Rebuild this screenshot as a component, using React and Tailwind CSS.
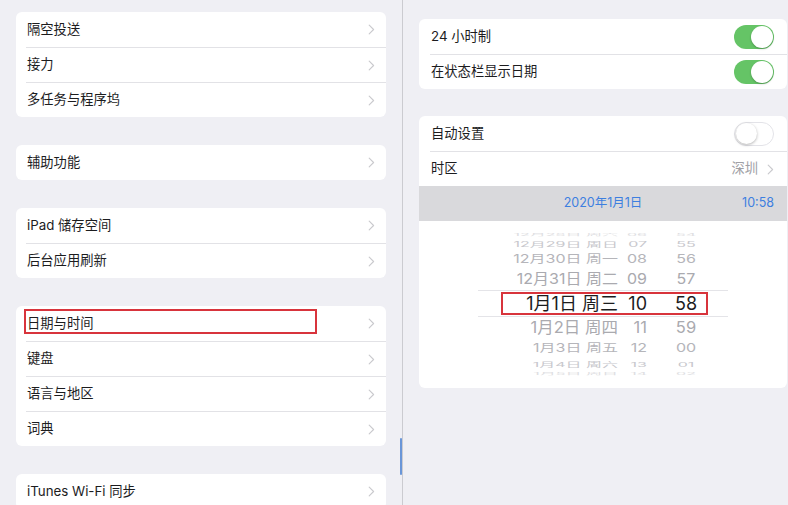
import React from 'react'

const Chevron = () => (
  <svg width="7" height="11" viewBox="0 0 7 11" fill="none">
    <path d="M1.2 1.2l4.4 4.3L1.2 9.8" stroke="#cacace" strokeWidth="1.15" strokeLinecap="round" strokeLinejoin="round" />
  </svg>
)

function Toggle({ on }) {
  if (on) {
    return (
      <div className="w-[40px] h-[24px] rounded-full bg-[#65c466] flex items-center justify-end pr-px">
        <div className="w-[22px] h-[22px] rounded-full bg-white shadow-[0_1px_2px_rgba(0,0,0,0.25)]" />
      </div>
    )
  }
  return (
    <div className="w-[40px] h-[24px] rounded-full bg-white border border-[#e3e3e8] flex items-center pl-px">
      <div className="w-[21px] h-[21px] rounded-full bg-white shadow-[0_1px_3px_rgba(0,0,0,0.3)]" />
    </div>
  )
}

function LeftCard({ items, highlight }) {
  return (
    <div className="relative shrink-0 bg-white rounded-md overflow-hidden">
      {items.map((label, i) => (
        <div key={label} className="h-[35px] pl-[10px]">
          <div className={`h-full flex items-center justify-between pl-px pr-[11px] ${i > 0 ? 'border-t border-[#e2e2e6]' : ''}`}>
            <span className="text-[13.3px] text-[#1c1c1e]">{label}</span>
            <Chevron />
          </div>
        </div>
      ))}
      {highlight && (
        <div className="absolute left-[8px] top-[3px] w-[293px] h-[25px] border-2 border-[#d8343c]" />
      )}
    </div>
  )
}

// wheel rows: perspective is faked by squashing the rows away from the centre
const rows = [
  { d: '12月28日 周六', h: '06', m: '54', hh: 'h-[5px]', cls: 'text-[16px] scale-y-[0.2] text-[#dedee2]' },
  { d: '12月29日 周日', h: '07', m: '55', hh: 'h-[13px]', cls: 'text-[16px] scale-y-[0.45] text-[#c8c8cd]' },
  { d: '12月30日 周一', h: '08', m: '56', hh: 'h-[18px]', cls: 'text-[16px] scale-y-[0.72] text-[#b5b5ba]' },
  { d: '12月31日 周二', h: '09', m: '57', hh: 'h-[22px]', cls: 'text-[16px] scale-y-[0.9] text-[#aaaaaf]' },
  { d: '1月1日 周三', h: '10', m: '58', hh: 'h-[27px]', cls: 'text-[18px] text-[#1c1c1e]', sel: true },
  { d: '1月2日 周四', h: '11', m: '59', hh: 'h-[21px]', cls: 'text-[16.5px] scale-y-[0.95] text-[#aaaaaf]' },
  { d: '1月3日 周五', h: '12', m: '00', hh: 'h-[19px]', cls: 'text-[16px] scale-y-[0.72] text-[#b5b5ba]' },
  { d: '1月4日 周六', h: '13', m: '01', hh: 'h-[14px]', cls: 'text-[16px] scale-y-[0.42] text-[#c8c8cd]' },
  { d: '1月5日 周日', h: '14', m: '02', hh: 'h-[5px]', cls: 'text-[16px] scale-y-[0.2] text-[#dedee2]' },
]

function Picker() {
  return (
    <div className="pt-[11px] pb-[12px] overflow-hidden">
      {rows.map((r) => (
        <div
          key={r.d}
          className={`relative ml-[59px] w-[250px] flex items-center ${r.hh} ${r.sel ? 'border-y border-[#e4e4e8]' : ''}`}
        >
          <div className={`flex items-center leading-none whitespace-nowrap ${r.cls}`}>
            <span className="w-[140px] text-right">{r.d}</span>
            <span className="w-[29px] text-right">{r.h}</span>
            <span className="ml-[13px] w-[52px] text-center">{r.m}</span>
          </div>
          {r.sel && (
            <div className="absolute left-[23px] top-px w-[207px] h-[23px] border-2 border-[#d8343c]" />
          )}
        </div>
      ))}
    </div>
  )
}

function RightRow({ first, children }) {
  return (
    <div className="h-[35px] pl-[11px]">
      <div className={`h-full flex items-center justify-between pl-px pr-[13px] ${first ? '' : 'border-t border-[#e2e2e6]'}`}>
        {children}
      </div>
    </div>
  )
}

export default function App() {
  return (
    <div className="w-[788px] h-[505px] overflow-hidden bg-[#efeff4] flex font-[Inter,'Noto_Sans_CJK_SC',sans-serif]">
      {/* Left column */}
      <div className="relative w-[403px] shrink-0 border-r border-[#cbcbd0] pt-[12px] pl-[16px] pr-[16px] flex flex-col gap-[28px]">
        <LeftCard items={['隔空投送', '接力', '多任务与程序坞']} />
        <LeftCard items={['辅助功能']} />
        <LeftCard items={['iPad 储存空间', '后台应用刷新']} />
        <LeftCard items={['日期与时间', '键盘', '语言与地区', '词典']} highlight />
        <LeftCard items={['iTunes Wi-Fi 同步']} />
        <div className="absolute right-0 top-[438px] w-[2px] h-[37px] rounded-full bg-[#6a96d8]" />
      </div>

      {/* Right column */}
      <div className="flex-1 pt-[19px] pl-[16px] pr-px flex flex-col gap-[27px]">
        <div className="shrink-0 bg-white rounded-md overflow-hidden">
          <RightRow first>
            <span className="text-[13.3px] text-[#1c1c1e]">24 小时制</span>
            <Toggle on />
          </RightRow>
          <RightRow>
            <span className="text-[13.3px] text-[#1c1c1e]">在状态栏显示日期</span>
            <Toggle on />
          </RightRow>
        </div>

        <div className="shrink-0 bg-white rounded-md overflow-hidden">
          <RightRow first>
            <span className="text-[13.3px] text-[#1c1c1e]">自动设置</span>
            <Toggle on={false} />
          </RightRow>
          <RightRow>
            <span className="text-[13.3px] text-[#1c1c1e]">时区</span>
            <div className="flex items-center gap-[9px]">
              <span className="text-[13.3px] text-[#a0a0a5]">深圳</span>
              <Chevron />
            </div>
          </RightRow>
          <div className="relative h-[35px] bg-[#d9d9dc] flex items-center text-[12.5px] text-[#3d7fe0]">
            <span className="w-[368px] text-center">2020年1月1日</span>
            <span className="absolute right-[13px]">10:58</span>
          </div>
          <Picker />
        </div>
      </div>
    </div>
  )
}
